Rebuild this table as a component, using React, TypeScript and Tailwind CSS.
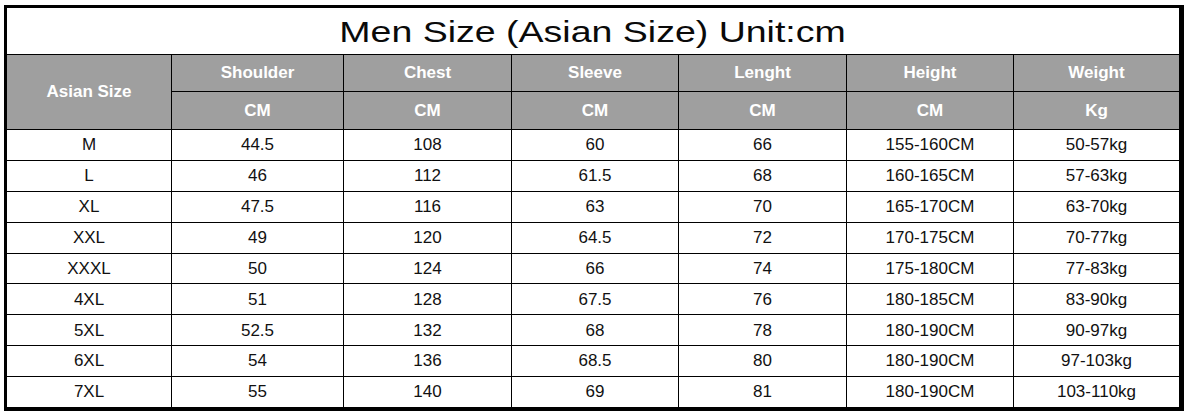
import React from "react";

const rows: string[][] = [
  ["M", "44.5", "108", "60", "66", "155-160CM", "50-57kg"],
  ["L", "46", "112", "61.5", "68", "160-165CM", "57-63kg"],
  ["XL", "47.5", "116", "63", "70", "165-170CM", "63-70kg"],
  ["XXL", "49", "120", "64.5", "72", "170-175CM", "70-77kg"],
  ["XXXL", "50", "124", "66", "74", "175-180CM", "77-83kg"],
  ["4XL", "51", "128", "67.5", "76", "180-185CM", "83-90kg"],
  ["5XL", "52.5", "132", "68", "78", "180-190CM", "90-97kg"],
  ["6XL", "54", "136", "68.5", "80", "180-190CM", "97-103kg"],
  ["7XL", "55", "140", "69", "81", "180-190CM", "103-110kg"],
];

const heads = ["Shoulder", "Chest", "Sleeve", "Lenght", "Height", "Weight"];
const units = ["CM", "CM", "CM", "CM", "CM", "Kg"];

export default function App() {
  return (
    <div
      className="w-[1188px] h-[417px] bg-white pt-[5px] pl-[4px]"
      style={{ fontFamily: '"Liberation Sans", Arial, sans-serif' }}
    >
      <div className="w-[1180px] h-[406px] border-black border-l-[3px] border-t-[3px] border-r-[4px] border-b-[4px] bg-black">
        <div className="grid h-full gap-px grid-cols-[164px_171px_167px_166px_167px_166px_165px] grid-rows-[46px_36px_37px_repeat(9,1fr)]">
          <div className="col-span-7 bg-white flex items-center justify-center">
            <span className="inline-block text-[30px] leading-none text-[#0a0a0a] scale-x-[1.25] pt-[2px]">
              Men Size (Asian Size) Unit:cm
            </span>
          </div>
          <div className="row-span-2 bg-[#9f9f9f] flex items-center justify-center text-white font-bold text-[17px]">
            Asian Size
          </div>
          {heads.map((h) => (
            <div
              key={h}
              className="bg-[#9f9f9f] flex items-center justify-center text-white font-bold text-[17px]"
            >
              {h}
            </div>
          ))}
          {units.map((u, i) => (
            <div
              key={i}
              className="bg-[#9f9f9f] flex items-center justify-center text-white font-bold text-[17px]"
            >
              {u}
            </div>
          ))}
          {rows.map((r, ri) =>
            r.map((c, ci) => (
              <div
                key={ri + "-" + ci}
                className="bg-white flex items-center justify-center text-[#111] text-[17px]"
              >
                {c}
              </div>
            ))
          )}
        </div>
      </div>
    </div>
  );
}
